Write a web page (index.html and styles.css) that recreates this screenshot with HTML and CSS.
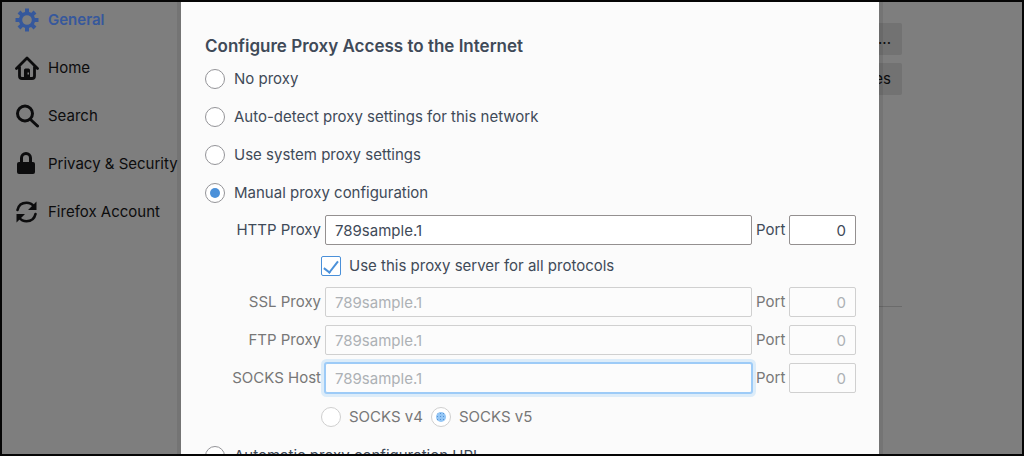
FILE: index.html
```html
<!DOCTYPE html>
<html lang="en">
<head>
<meta charset="utf-8">
<title>Connection Settings</title>
<link rel="stylesheet" href="styles.css">
</head>
<body>
<div class="window">
  <div class="page">
    <nav class="sidebar">
      <a class="nav-item nav-item-active" href="#general">
        <svg class="icon" viewBox="0 0 24 24"><g fill="none" stroke="currentColor"><circle cx="12" cy="12" r="6.5" stroke-width="3.4"/><path stroke-width="4" d="M12 .5v4.700M12 18.800v4.700M.5 12h4.700M18.800 12h4.700M4 4l3.200 3.200M16.800 16.800l3.200 3.200M4 20l3.200-3.200M16.800 7.200l3.200-3.200"/></g></svg>
        <span>General</span>
      </a>
      <a class="nav-item" href="#home">
        <svg class="icon" viewBox="0 0 24 24"><path fill="none" stroke="currentColor" stroke-width="2.8" stroke-linecap="round" stroke-linejoin="round" d="M1.5 12.5 12 2l10.500 10.500M4.500 11v9q0 2.500 2.500 2.500h10q2.500 0 2.500-2.500v-9"/><path fill="currentColor" fill-rule="evenodd" d="M9 22v-8q0-1.500 1.500-1.500h3q1.500 0 1.500 1.500v8zM12.500 16.500v2h1.500v-2z"/></svg>
        <span>Home</span>
      </a>
      <a class="nav-item" href="#search">
        <svg class="icon" viewBox="0 0 24 24"><g fill="none" stroke="currentColor" stroke-width="3" stroke-linecap="round"><circle cx="10" cy="9.500" r="7.500"/><path d="m15.500 15.500 7 6.500"/></g></svg>
        <span>Search</span>
      </a>
      <a class="nav-item" href="#privacy">
        <svg class="icon" viewBox="0 0 24 24"><rect x="2" y="10" width="18" height="12" rx="2" fill="currentColor"/><path fill="none" stroke="currentColor" stroke-width="3" d="M6.500 11V6a4.500 4.500 0 0 1 9 0v5"/></svg>
        <span>Privacy &amp; Security</span>
      </a>
      <a class="nav-item" href="#account">
        <svg class="icon" viewBox="0 0 24 24"><path fill="none" stroke="currentColor" stroke-width="2.600" stroke-linecap="round" d="M2.500 10C3.500 5.500 7 2.800 11.500 2.800c3 0 5.500 1.200 7.500 3.700M20.500 14c-1 4.500-4.500 7.200-9 7.200-3 0-5.500-1.200-7.500-3.700"/><path fill="currentColor" d="M21.500 1.500v8.500h-8.500zM1.500 22.500V14H10z"/></svg>
        <span>Firefox Account</span>
      </a>
    </nav>
    <main class="content">
      <button class="page-button" type="button">y...</button>
      <button class="page-button" type="button">es</button>
      <hr class="divider">
    </main>
  </div>

  <div class="overlay">
    <form class="dialog">
      <h1 class="title">Configure Proxy Access to the Internet</h1>
      <div class="options">
        <label class="choice"><input class="radio" type="radio" name="proxy"><span>No proxy</span></label>
        <label class="choice"><input class="radio" type="radio" name="proxy"><span>Auto-detect proxy settings for this network</span></label>
        <label class="choice"><input class="radio" type="radio" name="proxy"><span>Use system proxy settings</span></label>
        <label class="choice"><input class="radio" type="radio" name="proxy" checked><span>Manual proxy configuration</span></label>
      </div>
      <div class="fields">
        <div class="field">
          <label class="field-label" for="http">HTTP Proxy</label>
          <input class="text" id="http" type="text" value="789sample.1">
          <label for="http-port">Port</label>
          <input class="text port" id="http-port" type="text" value="0">
        </div>
        <div class="sub">
          <label class="choice"><input class="checkbox" type="checkbox" checked><span>Use this proxy server for all protocols</span></label>
        </div>
        <div class="field field-disabled">
          <label class="field-label" for="ssl">SSL Proxy</label>
          <input class="text" id="ssl" type="text" value="789sample.1" disabled>
          <label for="ssl-port">Port</label>
          <input class="text port" id="ssl-port" type="text" value="0" disabled>
        </div>
        <div class="field field-disabled">
          <label class="field-label" for="ftp">FTP Proxy</label>
          <input class="text" id="ftp" type="text" value="789sample.1" disabled>
          <label for="ftp-port">Port</label>
          <input class="text port" id="ftp-port" type="text" value="0" disabled>
        </div>
        <div class="field field-disabled">
          <label class="field-label" for="socks">SOCKS Host</label>
          <input class="text text-focus" id="socks" type="text" value="789sample.1" disabled>
          <label for="socks-port">Port</label>
          <input class="text port" id="socks-port" type="text" value="0" disabled>
        </div>
        <div class="sub sub-disabled">
          <label class="choice"><input class="radio" type="radio" name="socks" disabled><span>SOCKS v4</span></label>
          <label class="choice"><input class="radio" type="radio" name="socks" checked disabled><span>SOCKS v5</span></label>
        </div>
      </div>
      <label class="choice"><input class="radio" type="radio" name="proxy"><span>Automatic proxy configuration URL</span></label>
    </form>
  </div>
</div>
</body>
</html>
```

FILE: styles.css
```css
* {
  box-sizing: border-box;
}

body {
  margin: 0;
  font: 15px/20px Inter, "Liberation Sans", sans-serif;
  color: #3f4a58;
}

.window {
  position: relative;
  height: 100vh;
  overflow: hidden;
  border: 2px solid #050505;
  background: #7e7e7e;
}

.page {
  display: flex;
  height: 100%;
}

.sidebar {
  display: flex;
  flex-direction: column;
  gap: 24px;
  flex: none;
  padding: 6px 0 0 13px;
}

.nav-item {
  display: flex;
  align-items: center;
  gap: 9px;
  height: 24px;
  color: #0c0c0d;
  text-decoration: none;
  white-space: nowrap;
}

.nav-item-active {
  color: #36589c;
  font-weight: 600;
}

.icon {
  flex: none;
  width: 24px;
  height: 24px;
}

.content {
  display: flex;
  flex: 1;
  flex-direction: column;
  align-items: flex-end;
  gap: 8px;
  padding: 21px 120px 0 0;
}

.page-button {
  width: 120px;
  height: 32px;
  padding: 0 11px;
  border: 0;
  border-radius: 2px;
  background: #727272;
  color: #0c0c0d;
  font: inherit;
  text-align: right;
}

.divider {
  width: 90%;
  margin: 203px 0 0;
  border: 0;
  border-top: 1px solid #6b6b6b;
}

.overlay {
  position: absolute;
  inset: 0;
  padding: 0 143px 0 179px;
}

.dialog {
  padding: 34px 23px 0 24px;
  min-height: 100%;
  background: #fbfbfb;
  box-shadow: 0 0 0 4px rgba(0, 0, 0, 0.08);
}

.title {
  margin: 0 0 13px;
  font-size: 17px;
  line-height: 20px;
  font-weight: 600;
}

.options {
  display: flex;
  flex-direction: column;
  gap: 18px;
}

.choice {
  display: flex;
  align-items: center;
  gap: 9px;
  white-space: nowrap;
}

.radio,
.checkbox {
  display: grid;
  flex: none;
  place-content: center;
  width: 20px;
  height: 20px;
  margin: 0;
  appearance: none;
  border: 1px solid #949498;
  background: #fff;
}

.radio {
  border-radius: 50%;
}

.radio:checked::before {
  content: "";
  width: 10px;
  height: 10px;
  border-radius: 50%;
  background: #4a90d9;
}

.radio:disabled {
  border-color: #cfcfcf;
}

.radio:disabled:checked::before {
  background: radial-gradient(circle, #5593d6 30%, transparent 40%) 0 0 / 3px 3px #94c6f5;
}

.checkbox {
  border-color: #4a90d9;
  border-radius: 2px;
}

.checkbox:checked::before {
  content: "";
  width: 6px;
  height: 13px;
  border: solid #4a90d9;
  border-width: 0 2px 2px 0;
  transform: translateY(-1px) rotate(38deg);
}

.fields {
  display: flex;
  flex-direction: column;
  gap: 8px;
  margin: 12px 0 16px;
}

.field {
  display: grid;
  grid-template-columns: 116px 1fr 29px 67px;
  align-items: center;
  gap: 4px;
}

.field-label {
  text-align: right;
}

.field-disabled,
.sub-disabled {
  color: #777;
}

.text {
  width: 100%;
  min-width: 0;
  height: 30px;
  padding: 0 9px;
  border: 1px solid #949090;
  border-radius: 2px;
  background: #fff;
  color: #3f4a58;
  font: inherit;
}

.text:disabled {
  border-color: #d0d0d0;
  background: #fcfcfc;
  color: #adb1b5;
}

.port {
  text-align: right;
}

.text-focus:disabled {
  border-color: #9dcbf7;
  box-shadow: 0 0 0 1px #9dcbf7, 0 0 0 4px #dcecf9;
}

.sub {
  display: flex;
  gap: 8px;
  padding: 3px 0 3px 116px;
}

.sub .choice {
  gap: 8px;
}

.sub-disabled {
  padding-top: 6px;
}
```
